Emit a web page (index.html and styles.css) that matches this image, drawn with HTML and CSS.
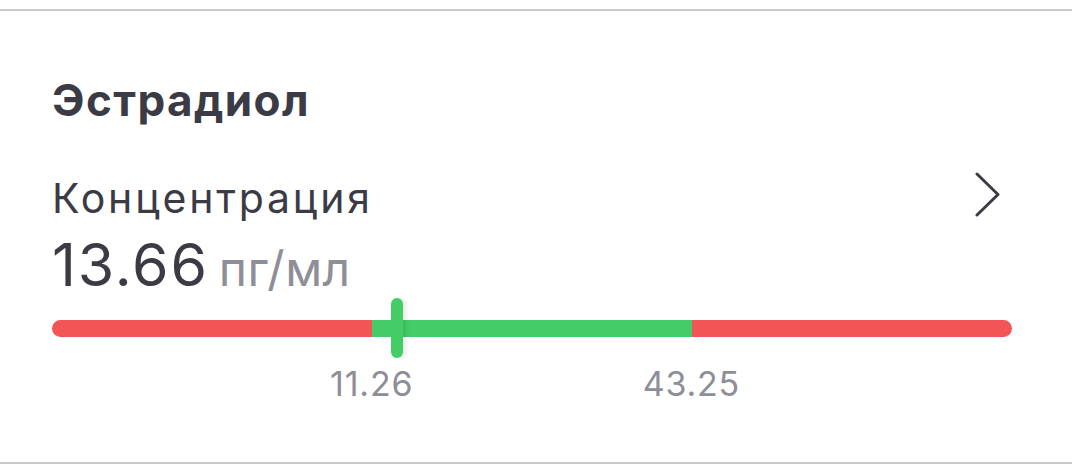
FILE: index.html
```html
<!DOCTYPE html>
<html lang="ru">
<head>
    <meta charset="UTF-8">
    <title>Эстрадиол</title>
    <link rel="stylesheet" href="styles.css">
</head>
<body>
    <div class="card">
        <h2 class="title">Эстрадиол</h2>
        <div class="metric-row">
            <span class="metric-name">Концентрация</span>
            <svg class="chevron" width="28" height="46" viewBox="0 0 28 46">
                <path d="M3 2 L24 22.5 L3 43" fill="none" stroke="#3c3c46" stroke-width="3" stroke-linecap="round" stroke-linejoin="round"/>
            </svg>
        </div>
        <div class="value">
            <span class="number">13.66</span>
            <span class="unit">пг/мл</span>
        </div>
        <div class="scale">
            <div class="bar">
                <div class="seg low" style="width: 33.3%"></div>
                <div class="seg norm" style="width: 33.4%"></div>
                <div class="seg high"></div>
            </div>
            <div class="marker" style="left: 35.9%"></div>
        </div>
        <div class="limits">
            <span class="limit" style="left: 33.3%">11.26</span>
            <span class="limit" style="left: 66.6%">43.25</span>
        </div>
    </div>
</body>
</html>
```

FILE: styles.css
```css
body {
    margin: 0;
    background-color: #ffffff;
    font-family: Inter, "Noto Sans", sans-serif;
    color: #3b3b45;
}
.card {
    margin-top: 9px;
    height: 455px;
    border-top: 2px solid #c8c8c8;
    border-bottom: 2px solid #c8c8c8;
    padding: 0 60px 0 52px;
    box-sizing: border-box;
}
.title {
    margin: 63px 0 0 0;
    font-size: 44px;
    font-weight: 700;
    line-height: 52px;
    letter-spacing: 1.4px;
}
.metric-row {
    display: flex;
    justify-content: space-between;
    align-items: flex-start;
    margin-top: 48px;
    height: 48px;
}
.metric-name {
    font-size: 41px;
    line-height: 48px;
    letter-spacing: 2.8px;
}
.chevron {
    display: block;
    margin: -2px 10px 0 0;
}
.value {
    display: flex;
    align-items: baseline;
    gap: 10px;
    margin-top: 10px;
}
.number {
    font-size: 59px;
    line-height: 66px;
    letter-spacing: 1.8px;
}
.unit {
    font-size: 48px;
    line-height: 48px;
    letter-spacing: 0.5px;
    color: #8e8e99;
}
.scale {
    position: relative;
    height: 60px;
    display: flex;
    align-items: center;
}
.bar {
    display: flex;
    width: 100%;
    height: 17px;
    border-radius: 9px;
    overflow: hidden;
}
.seg {
    height: 100%;
}
.low, .high {
    background-color: #f35557;
}
.high {
    flex: 1;
}
.norm {
    background-color: #44cc66;
}
.marker {
    position: absolute;
    top: 0;
    width: 12px;
    height: 60px;
    margin-left: -6px;
    border-radius: 6px;
    background-color: #44cc66;
    box-shadow: 3px 0 5px rgba(0, 0, 0, 0.1);
}
.limits {
    position: relative;
    height: 40px;
    margin-top: 6px;
}
.limit {
    position: absolute;
    top: 0;
    transform: translateX(-50%);
    font-size: 34px;
    line-height: 40px;
    letter-spacing: 0.8px;
    color: #8e8e99;
}
```
